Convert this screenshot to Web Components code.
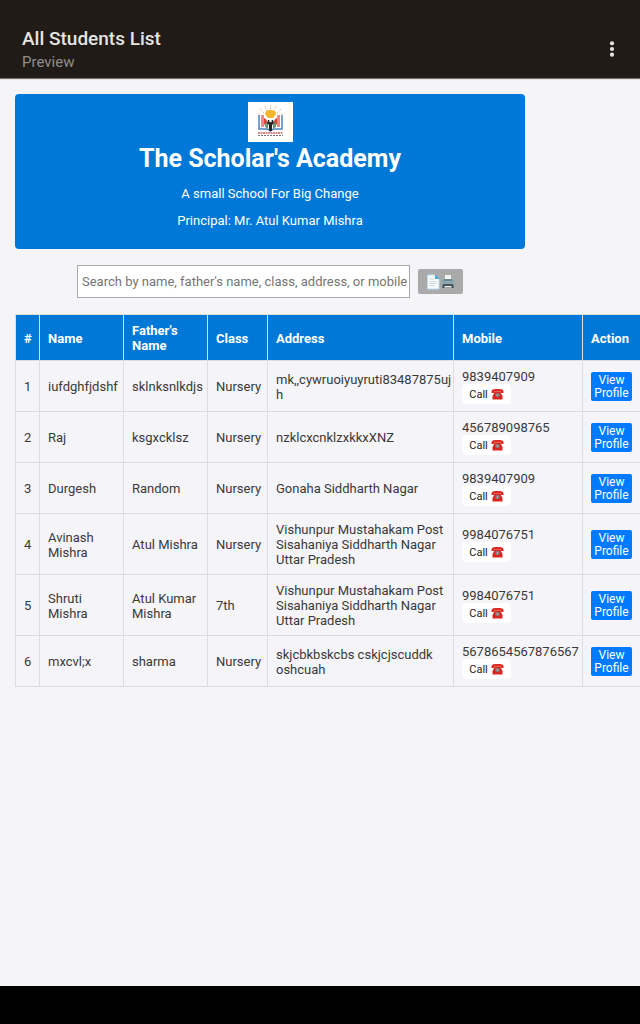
<!DOCTYPE html>
<html lang="en">
<head>
<meta charset="utf-8">
<meta name="viewport" content="width=device-width, initial-scale=1">
<title>All Students List</title>
<style>
body { margin: 0; font-family: Roboto, "Noto Sans", sans-serif; overflow-x: hidden; background: #f4f4f9; }
</style>
</head>
<body>
<student-app>
  <app-bar slot="bar"><span slot="title">All Students List</span><span slot="subtitle">Preview</span></app-bar>
  <school-banner><span slot="name">The Scholar's Academy</span><span slot="motto">A small School For Big Change</span><span slot="principal">Principal: Mr. Atul Kumar Mishra</span></school-banner>
  <student-search></student-search>
  <student-table slot="wide"></student-table>
</student-app>
<script>
const define = (name, html, setup) => customElements.define(name, class extends HTMLElement {
  constructor() {
    super();
    this.attachShadow({ mode: "open" }).innerHTML = html;
    if (setup) setup(this.shadowRoot);
  }
});

define("student-app", `
<style>
:host { display: flex; flex-direction: column; min-height: 100vh; }
main { flex: 1; padding: 16px 0 0 15px; }
.content { margin-right: 18.4%; }
.nav { height: 38px; background: #000; }
</style>
<slot name="bar"></slot>
<main><div class="content"><slot></slot></div><slot name="wide"></slot></main>
<div class="nav"></div>`);

define("app-bar", `
<style>
:host { display: flex; align-items: center; justify-content: space-between; box-sizing: border-box; height: 78px; padding: 20px 16px 0 22px; background: #201b17; box-shadow: 0 1px 1px #77736f; }
h1 { margin: 0; font-size: 19px; line-height: 25px; font-weight: 500; color: #e6e4e2; }
p { margin: 0; font-size: 15px; line-height: 22px; color: #918d8a; }
button { display: flex; width: 24px; height: 24px; padding: 0; border: 0; background: none; }
</style>
<div><h1><slot name="title"></slot></h1><p><slot name="subtitle"></slot></p></div>
<button aria-label="More options"><svg width="24" height="24" viewBox="0 0 24 24" fill="#e6e4e2"><circle cx="12" cy="6.3" r="2.1"/><circle cx="12" cy="12" r="2.1"/><circle cx="12" cy="17.7" r="2.1"/></svg></button>`);

define("school-logo", `
<style>:host { display: block; width: 45px; height: 40px; background: #fff; } svg { display: block; }</style>
<svg width="45" height="40" viewBox="0 0 45 40" role="img" aria-label="School logo">
<g stroke="#edb183" stroke-width="1" stroke-dasharray="1.2 1" fill="none"><path d="M22.500 9V3M19 9L17 4M26 9L28 4M16 11L12 7M29 11L33 7M14 14L10 11M31 14L35 11"/></g>
<path d="M12 13h5q4 0 5.500 5q1.500-5 5.500-5h5v14h-6q-3 0-4.500 2q-1.500-2-4.500-2h-6z" fill="#fff"/>
<path d="M11 13v14h7q3 0 4.500 2q1.500-2 4.500-2h7V13" fill="none" stroke="#4c84c0" stroke-width="1.500"/>
<path d="M13 13h3v12h-3zM29 13h3v12h-3z" fill="#f08b84"/>
<path d="M17 18l3 3v6l-3-2zM28 18l-3 3v6l3-2z" fill="#6d9a72"/>
<path d="M16 16q3 1 3 4l-3 3zM29 16q-3 1-3 4l3 3z" fill="#d94436"/>
<path d="M17 12q0-4 5.500-4t5.500 4l-3 4h-5z" fill="#f4b52d"/>
<path d="M20 18h5l1 3l-2 2v6h-3v-6l-2-2z" fill="#292424"/><circle cx="22.500" cy="19" r="1.300" fill="#fff"/>
<path d="M10 31h25" stroke="#c8666a" stroke-width="1.500" stroke-dasharray="2 .5"/><path d="M10 33.500h25" stroke="#77747a" stroke-dasharray="2 1"/>
</svg>`);

define("school-banner", `
<style>
:host { display: flex; flex-direction: column; align-items: center; padding: 8px 8px 14px; border-radius: 4px; background: #0078d7; color: #fff; text-align: center; }
h2 { margin: 0 0 9px; font-size: 25px; line-height: 33px; font-weight: 700; }
p { margin: 0 0 7px; font-size: 13px; line-height: 20px; }
p:last-child { margin-bottom: 4px; }
</style>
<school-logo></school-logo>
<h2><slot name="name"></slot></h2><p><slot name="motto"></slot></p><p><slot name="principal"></slot></p>`);

define("student-search", `
<style>
:host { display: flex; justify-content: center; align-items: center; gap: 8px; margin: 16px 0; }
input { box-sizing: border-box; width: 333px; height: 33px; padding: 0 0 0 4px; border: 1px solid #aaa; background: #fff; font: 13px Roboto, sans-serif; color: #333; }
input::placeholder { color: #757575; opacity: 1; }
button { display: flex; align-items: center; justify-content: center; gap: 1px; width: 45px; height: 25px; padding: 0; border: 0; border-radius: 2px; background: #aaa; }
</style>
<input type="text" aria-label="Search students" placeholder="Search by name, father's name, class, address, or mobile">
<button aria-label="Print list">
<svg width="14" height="16" viewBox="0 0 14 16"><path d="M1.500 1H9l4 4v10H1.500z" fill="#f7fbfd" stroke="#b9dcef"/><path d="M9 .5L13.500 5H9z" fill="#4aa5e0"/><path d="M3.500 5H8M3.500 7.500h7M3.500 9.500h7M3.500 11.500h5" stroke="#cfd5d8"/></svg>
<svg width="14" height="16" viewBox="0 0 14 16"><path d="M4 1h6v6H4z" fill="#f3f3f3"/><path d="M1 6l2-1h8l2 1l1 5l-1 2H1l-1-2z" fill="#8ea8b3"/><path d="M3 5h8v2H3z" fill="#6c8792"/><path d="M2 10h10l1 4H1z" fill="#4c565a"/><path d="M4 12h6l1 1.500H3z" fill="#eee"/></svg>
</button>`);

define("call-button", `
<style>
:host { display: block; }
button { display: flex; align-items: center; justify-content: center; gap: 3px; width: 49px; height: 20px; padding: 0; border: 0; border-radius: 4px; background: #fff; font: 11px Roboto, sans-serif; color: #222; }
</style>
<button>Call <svg width="13" height="12" viewBox="0 0 13 12"><path d="M.5 5V3Q1 1 4 1h5q3 0 3.500 2v2H9.500V3.500h-6V5z" fill="#e02b24"/><path d="M4 3.500h5l2.500 4.500v3.500h-10V8z" fill="#d9251e"/><circle cx="6.500" cy="7" r="2.300" fill="#8a7774"/><circle cx="6.500" cy="7" r="1" fill="#b5a09d"/></svg></button>`);

define("profile-button", `
<style>
:host { display: block; }
button { display: block; width: 41px; padding: 2px 0 1px; border: 0; border-radius: 2px; background: #007bff; color: #fff; font: 12px/13px Roboto, sans-serif; text-align: center; }
</style>
<button>View Profile</button>`);

const students = [
  ["iufdghfjdshf", "sklnksnlkdjs", "Nursery", "mk,,cywruoiyuyruti83487875ujh", "9839407909"],
  ["Raj", "ksgxcklsz", "Nursery", "nzklcxcnklzxkkxXNZ", "456789098765"],
  ["Durgesh", "Random", "Nursery", "Gonaha Siddharth Nagar", "9839407909"],
  ["Avinash Mishra", "Atul Mishra", "Nursery", "Vishunpur Mustahakam Post Sisahaniya Siddharth Nagar Uttar Pradesh", "9984076751"],
  ["Shruti Mishra", "Atul Kumar Mishra", "7th", "Vishunpur Mustahakam Post Sisahaniya Siddharth Nagar Uttar Pradesh", "9984076751"],
  ["mxcvl;x", "sharma", "Nursery", "skjcbkbskcbs cskjcjscuddk oshcuah", "5678654567876567"]
];

define("student-table", `
<style>
:host { display: block; }
table { table-layout: fixed; width: 626px; border-collapse: collapse; font-size: 13px; line-height: 15px; color: #3a3a3a; }
th, td { border: 1px solid #ddd; padding: 8px 8px 7px; text-align: left; vertical-align: middle; }
th { height: 30px; background: #0078d7; color: #fff; font-weight: 700; }
td { height: 35px; }
.address { padding-right: 1px; overflow-wrap: anywhere; }
</style>
<table>
<colgroup><col style="width:24px"><col style="width:84px"><col style="width:84px"><col style="width:60px"><col style="width:186px"><col style="width:129px"><col style="width:59px"></colgroup>
<thead><tr><th>#</th><th>Name</th><th>Father's Name</th><th>Class</th><th>Address</th><th>Mobile</th><th>Action</th></tr></thead>
<tbody></tbody>
</table>`, root => {
  root.querySelector("tbody").innerHTML = students.map(([name, father, grade, address, mobile], i) =>
    `<tr><td>${i + 1}</td><td>${name}</td><td>${father}</td><td>${grade}</td><td class="address">${address}</td><td>${mobile}<call-button></call-button></td><td><profile-button></profile-button></td></tr>`).join("");
});
</script>
</body>
</html>
